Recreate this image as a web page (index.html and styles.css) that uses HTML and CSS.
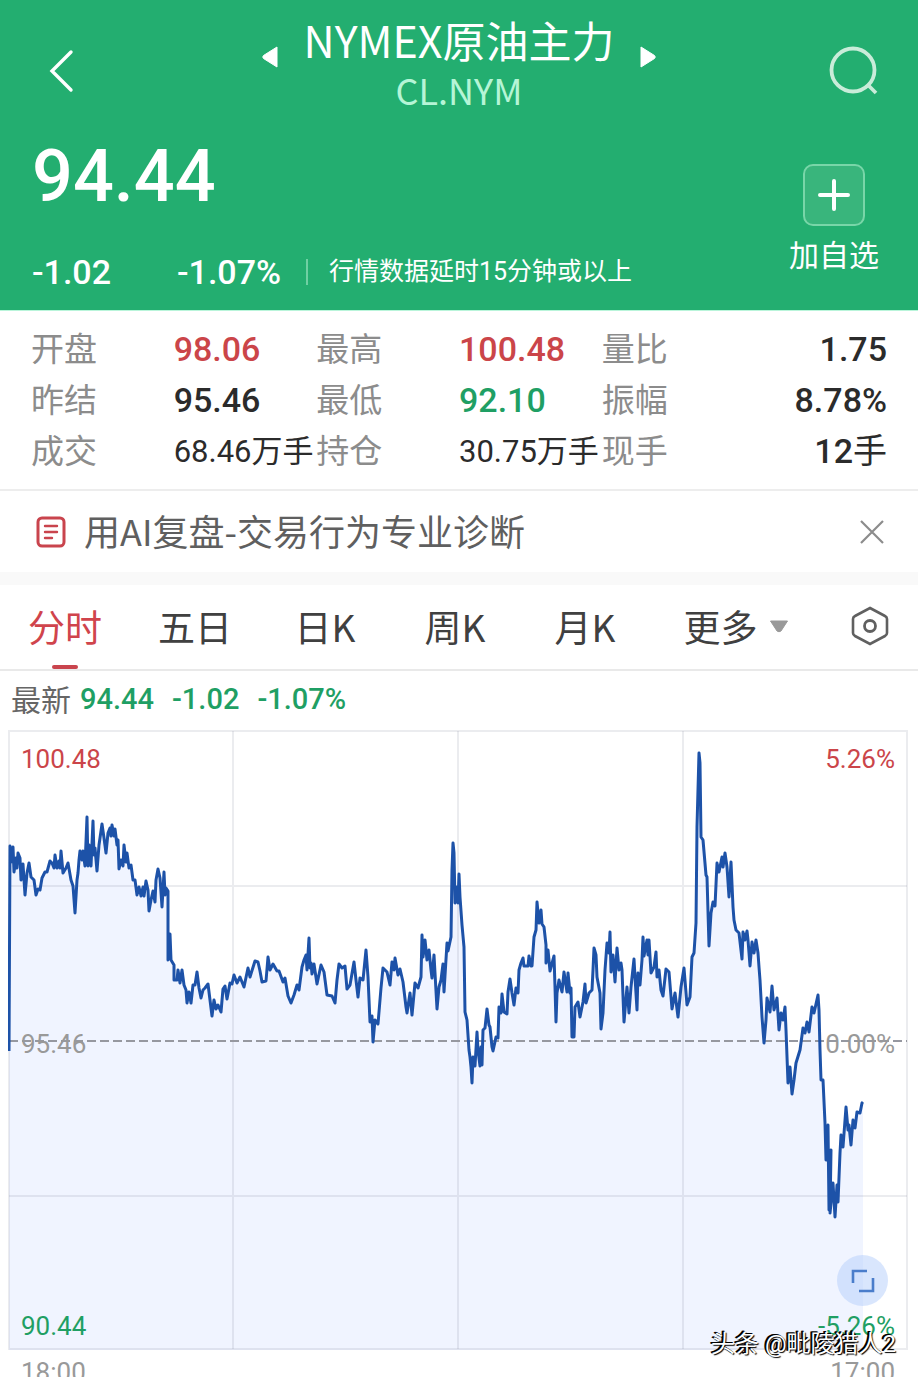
FILE: index.html
```
<!DOCTYPE html>
<html lang="zh-CN">
<head>
    <meta charset="UTF-8">
    <meta name="viewport" content="width=device-width, initial-scale=1.0">
    <title>NYMEX原油主力</title>
    <link rel="stylesheet" href="styles.css">
</head>
<body>
    <div class="app">
        <header class="header">
            <div class="nav">
                <button class="icon-button back" aria-label="返回">
                    <svg width="26" height="44" viewBox="0 0 26 44"><path d="M23 3L4 22l19 19" fill="none" stroke="#fff" stroke-width="3.4" stroke-linecap="round"/></svg>
                </button>
                <div class="switcher">
                    <button class="icon-button arrow" aria-label="上一个">
                        <svg width="16" height="24" viewBox="0 0 16 24"><path d="M15 2v20L1.500 13.500q-1.500-1.500 0-3z" fill="#fff" stroke="#fff" stroke-linejoin="round"/></svg>
                    </button>
                    <div class="name">
                        <h1>NYMEX原油主力</h1>
                        <p>CL.NYM</p>
                    </div>
                    <button class="icon-button arrow" aria-label="下一个">
                        <svg width="16" height="24" viewBox="0 0 16 24"><path d="M1 2v20l13.500-8.500q1.500-1.500 0-3z" fill="#fff" stroke="#fff" stroke-linejoin="round"/></svg>
                    </button>
                </div>
                <button class="icon-button search" aria-label="搜索">
                    <svg width="50" height="50" viewBox="0 0 50 50" fill="none" stroke="#c9ecd9" stroke-width="3.8"><circle cx="25" cy="24" r="21.500"/><path d="M40 39l8 8"/></svg>
                </button>
            </div>
            <div class="quote">
                <div>
                    <div class="price">94.44</div>
                    <div class="change">
                        <span class="diff">-1.02</span>
                        <span>-1.07%</span>
                        <small>行情数据延时15分钟或以上</small>
                    </div>
                </div>
                <button class="add">
                    <span class="add-box">
                        <svg width="32" height="32" viewBox="0 0 32 32"><path d="M16 2v28M2 16h28" stroke="#fff" stroke-width="4" stroke-linecap="round"/></svg>
                    </span>
                    加自选
                </button>
            </div>
        </header>

        <dl class="stats">
            <dt>开盘</dt><dd class="up">98.06</dd>
            <dt>最高</dt><dd class="up">100.48</dd>
            <dt>量比</dt><dd class="end">1.75</dd>
            <dt>昨结</dt><dd>95.46</dd>
            <dt>最低</dt><dd class="down">92.10</dd>
            <dt>振幅</dt><dd class="end">8.78%</dd>
            <dt>成交</dt><dd class="long">68.46万手</dd>
            <dt>持仓</dt><dd class="long">30.75万手</dd>
            <dt>现手</dt><dd class="end">12<span class="unit">手</span></dd>
        </dl>

        <div class="banner">
            <svg width="30" height="32" viewBox="0 0 30 32" fill="none" stroke="#c9444d" stroke-width="3"><rect x="2" y="2" width="26" height="28" rx="4"/><path d="M9 10h12M9 16h12M9 22h7" stroke-width="2.400" stroke-linecap="round"/></svg>
            <a href="#">用AI复盘-交易行为专业诊断</a>
            <button class="icon-button" aria-label="关闭">
                <svg width="26" height="26" viewBox="0 0 26 26"><path d="M2 2l22 22M24 2L2 24" stroke="#8c8c8c" stroke-width="2.200"/></svg>
            </button>
        </div>

        <nav class="tabs">
            <button class="tab active">分时</button>
            <button class="tab">五日</button>
            <button class="tab">日K</button>
            <button class="tab">周K</button>
            <button class="tab">月K</button>
            <button class="tab">更多<svg width="20" height="14" viewBox="0 0 20 14"><path d="M1.500 2h17L12 12q-2 1.500-4 0z" fill="#999" stroke="#999" stroke-linejoin="round"/></svg></button>
            <button class="tab" aria-label="设置">
                <svg width="38" height="40" viewBox="0 0 38 40" fill="none" stroke="#606060" stroke-width="2.600"><path d="M19 2l15 8q2 1 2 3v14q0 2-2 3l-15 8-15-8q-2-1-2-3V13q0-2 2-3z"/><circle cx="19" cy="20" r="5.500" stroke-width="2.800"/></svg>
            </button>
        </nav>

        <div class="latest">
            <span class="label">最新</span>
            <span>94.44</span>
            <span>-1.02</span>
            <span>-1.07%</span>
        </div>

        <div class="chart">
            <svg class="plot" viewBox="8 730 900 620">
                <polygon id="area" fill="#f0f4ff"/>
                <g class="grid">
                    <rect x="9" y="731" width="898" height="618"/>
                    <path d="M233 731v618M458 731v618M683 731v618M9 886h898M9 1196h898"/>
                </g>
                <path class="zero" d="M9 1041h898"/>
                <polyline id="line" points="
                    9,1051 10,846 11,862 13,847 14,872 16,858 17,868 18,853 20,858 21,880 23,864 25,895 27,873 29,863 31,877 34,880
                    36,895 38,889 40,890 42,878 45,872 47,872 50,861 52,863 54,868 55,855 57,868 59,861 60,868 61,851 63,873 66,868
                    68,863 71,880 73,886 75,913 77,880 78,873 79,860 80,851 82,860 83,851 85,866 87,817 88,866 89,845 91,866 93,821
                    94,855 95,848 97,871 99,845 102,824 104,838 106,853 108,833 110,828 111,836 112,825 114,836 115,829 117,845
                    118,840 119,869 121,860 123,866 124,845 126,862 127,853 129,868 131,865 133,880 135,880 137,895 139,887 141,896
                    143,887 144,896 146,881 148,890 149,911 151,900 153,891 155,902 156,880 158,869 160,878 162,907 164,872 165,895
                    166,888 168,891 168,960 170,934 171,960 174,965 174,980 177,980 178,970 180,983 182,970 184,985 186,990 187,1003
                    189,992 191,1003 193,985 195,985 197,972 199,988 201,998 203,990 205,988 208,984 210,1000 212,1016 214,1000
                    216,1009 218,1005 221,1012 223,989 225,986 227,999 230,983 232,984 234,975 237,983 240,977 244,987 248,968
                    250,977 255,961 258,962 260,971 262,982 266,981 268,957 270,970 273,964 277,971 279,971 283,982 285,978
                    288,996 291,1003 294,995 297,985 299,990 302,967 304,960 306,955 307,970 309,938 310,968 311,963 312,974
                    314,964 317,984 321,965 324,972 327,995 332,996 335,1003 337,980 339,964 342,968 345,966 347,989 350,985
                    354,962 356,980 358,997 360,978 363,980 366,950 368,977 370,1022 372,1016 373,1042 375,1020 378,1024 381,988
                    383,968 387,972 390,985 392,962 394,970 395,958 398,975 400,969 403,982 406,1007 407,1013 410,993 412,1015
                    415,983 418,988 421,977 422,935 423,957 425,940 427,960 429,950 431,970 432,978 434,955 437,1009 439,987
                    441,980 443,964 444,992 447,943 448,951 451,937 452,870 453,843 454,853 455,903 457,887 458,903 459,874
                    460,897 462,925 464,947 465,1012 467,1020 469,1050 470,1057 471,1067 472,1083 473,1057 475,1066 477,1032
                    478,1050 480,1066 481,1047 482,1065 483,1030 485,1028 487,1009 489,1025 490,1027 492,1047 493,1051 496,1037
                    498,1038 499,1007 501,1013 502,994 504,1012 507,1014 508,992 510,979 512,993 514,1005 516,988 518,993
                    519,970 521,963 523,958 524,966 528,966 529,956 531,966 532,966 534,937 536,930 537,902 539,923 541,910
                    542,924 544,927 546,945 546,963 548,950 550,971 554,956 555,987 556,1022 557,993 559,980 562,992 564,972
                    567,992 568,973 570,993 571,988 572,1037 574,1037 575,1007 578,1002 580,1017 583,1002 585,984 586,1003
                    589,993 592,990 593,970 594,948 596,955 597,977 600,993 601,1029 603,1013 605,970 607,943 609,953 610,932
                    611,972 613,955 615,982 617,948 619,970 621,963 622,970 624,1022 627,987 629,1013 631,987 634,959 635,977
                    637,1010 638,973 640,985 642,960 643,937 644,956 647,940 648,955 649,940 651,973 654,967 656,952 657,977
                    659,970 661,990 663,996 666,969 669,972 672,1009 675,993 678,1017 681,987 684,968 687,1005 690,997
                    692,957 694,953 696,923 697,827 699,753 700,763 701,837 703,840 706,875 707,877 709,946 711,913 713,902
                    715,906 717,863 719,872 722,857 723,867 725,853 727,867 729,897 731,862 733,907 734,920 736,930 739,933
                    742,959 743,932 745,940 747,931 748,940 750,966 752,942 754,953 756,940 758,953 759,967 760,980 762,1017
                    764,1043 766,1020 767,998 770,1012 772,986 774,1010 777,998 779,1030 781,1013 783,1020 785,1007 786,1030
                    788,1083 790,1067 792,1094 794,1080 796,1063 800,1050 803,1028 805,1033 807,1022 809,1032 812,1007 814,1013
                    818,995 819,1010 820,1050 821,1080 823,1080 825,1123 826,1160 828,1125 829,1210 831,1150 830,1213 833,1183
                    835,1217 837,1185 838,1202 840,1153 841,1135 843,1147 846,1107 848,1130 849,1125 851,1145 853,1120 855,1128
                    857,1112 860,1113 862,1103 863,1102"/>
            </svg>
            <span class="mark top left up">100.48</span>
            <span class="mark top right up">5.26%</span>
            <span class="mark middle left">95.46</span>
            <span class="mark middle right">0.00%</span>
            <span class="mark bottom left down">90.44</span>
            <span class="mark bottom right down">-5.26%</span>
            <button class="expand" aria-label="全屏">
                <svg width="24" height="24" viewBox="0 0 24 24" fill="none" stroke="#4a7dcb" stroke-width="2.600"><path d="M2 14V2h14M22 9v13H8"/></svg>
            </button>
        </div>
        <div class="times">
            <span>18:00</span>
            <span>17:00</span>
        </div>
        <div class="watermark">头条 @毗陵猎人2</div>
    </div>

    <script>
        // Area under the price line
        const points = document.getElementById('line').getAttribute('points').trim();
        document.getElementById('area').setAttribute('points', '9,1350 ' + points + ' 863,1350');
    </script>
</body>
</html>
```

FILE: styles.css
```
* {
    box-sizing: border-box;
}
body {
    margin: 0;
    background-color: #fff;
    color: #2b2b2b;
    font-family: Roboto, "Noto Sans CJK SC", sans-serif;
}
button {
    padding: 0;
    border: none;
    background: none;
    color: inherit;
    font: inherit;
    cursor: pointer;
}
svg {
    display: block;
}
h1, p, dl, dd {
    margin: 0;
}
.app {
    position: relative;
    height: 100vh;
    overflow: hidden;
}
.up { color: #cb4549; }
.down { color: #1f9f64; }

/* Header */
.header {
    height: 311px;
    border-bottom: 1px solid #b9f5da;
    background-color: #23ae70;
    color: #fff;
}
.nav {
    display: grid;
    grid-template-columns: 1fr auto 1fr;
    align-items: center;
    height: 142px;
    padding: 0 40px;
}
.nav .back {
    justify-self: start;
    padding-left: 8px;
}
.nav .search {
    justify-self: end;
}
.switcher {
    display: flex;
    align-items: center;
    gap: 26px;
}
.arrow {
    margin-bottom: 28px;
}
.name {
    padding-bottom: 14px;
    text-align: center;
    font-family: "Noto Sans CJK SC", sans-serif;
    line-height: 50px;
}
.name h1 {
    font-size: 43px;
    font-weight: 400;
}
.name p {
    font-size: 36px;
    color: #b5f5d6;
}
.quote {
    display: flex;
    justify-content: space-between;
    padding: 0 39px 0 32px;
}
.price {
    font-size: 72px;
    font-weight: 500;
    line-height: 70px;
}
.change {
    display: flex;
    align-items: center;
    margin-top: 42px;
    font-size: 34px;
    font-weight: 500;
    line-height: 36px;
}
.change .diff {
    width: 145px;
}
.change small {
    margin-left: 25px;
    padding-left: 21px;
    border-left: 2px solid #6fd0a3;
    font-size: 25px;
    font-weight: 400;
    line-height: 26px;
}
.add {
    display: flex;
    flex-direction: column;
    align-items: center;
    margin-top: 22px;
    font-size: 30px;
    line-height: 60px;
}
.add-box {
    display: grid;
    place-items: center;
    width: 62px;
    height: 62px;
    border: 2px solid #78d6a8;
    border-radius: 10px;
    background-color: #39b57c;
}

/* Stats */
.stats {
    display: grid;
    grid-template-columns: repeat(6, 1fr);
    padding: 13px 31px 12px 31px;
    border-bottom: 2px solid #ededed;
    font-size: 33px;
    line-height: 51px;
    white-space: nowrap;
}
.stats dt {
    color: #8c8c8c;
}
.stats dd {
    font-size: 34px;
    font-weight: 500;
}
.stats .long {
    font-size: 31px;
    font-weight: 400;
}
.stats .end {
    text-align: right;
}
.stats .unit {
    font-weight: 400;
}

/* Banner */
.banner {
    display: flex;
    align-items: center;
    height: 94px;
    padding: 0 33px 0 36px;
    border-bottom: 13px solid #f9f9f9;
}
.banner a {
    flex: 1;
    margin-left: 18px;
    padding-bottom: 3px;
    color: #5f5f5f;
    font-family: "Noto Sans CJK SC", sans-serif;
    font-size: 36px;
    text-decoration: none;
}

/* Tabs */
.tabs {
    display: grid;
    grid-template-columns: repeat(5, 130fr) 172fr 96fr;
    height: 86px;
    border-bottom: 2px solid #e9e9e9;
}
.tab {
    position: relative;
    display: flex;
    align-items: center;
    justify-content: center;
    gap: 11px;
    padding-bottom: 2px;
    color: #404040;
    font-family: "Noto Sans CJK SC", sans-serif;
    font-size: 37px;
}
.tab.active {
    color: #d0444c;
}
.tab.active::after {
    content: "";
    position: absolute;
    bottom: 0;
    width: 26px;
    height: 4px;
    border-radius: 2px;
    background-color: #c9444d;
}

/* Chart */
.latest {
    display: flex;
    align-items: center;
    gap: 18px;
    height: 59px;
    padding: 0 0 4px 11px;
    color: #1f9f64;
    font-size: 29px;
    font-weight: 500;
}
.latest .label {
    margin-right: -9px;
    padding-bottom: 2px;
    color: #666;
    font-size: 30px;
    font-weight: 400;
}
.chart {
    position: relative;
    margin: 0 10px 0 8px;
}
.plot {
    width: 100%;
}
.grid {
    fill: none;
    stroke: rgba(120, 125, 145, 0.15);
    stroke-width: 2;
}
.zero {
    stroke: #9698a0;
    stroke-width: 2;
    stroke-dasharray: 9 4;
}
#line {
    fill: none;
    stroke: #1d52a8;
    stroke-width: 3;
    stroke-linejoin: round;
}
.mark {
    position: absolute;
    color: #999;
    font-size: 26px;
    line-height: 30px;
}
.mark.left { left: 13px; }
.mark.right { right: 13px; }
.mark.top { top: 14px; }
.mark.middle { top: 50%; margin-top: -11px; }
.mark.bottom { bottom: 9px; }
.mark.up { color: #cb4549; }
.mark.down { color: #1f9f64; }
.expand {
    position: absolute;
    right: 20px;
    bottom: 44px;
    display: grid;
    place-items: center;
    width: 51px;
    height: 51px;
    border-radius: 50%;
    background-color: rgba(185, 210, 252, 0.55);
}
.times {
    display: flex;
    justify-content: space-between;
    padding: 7px 23px 0 21px;
    color: #999;
    font-size: 26px;
    line-height: 30px;
}
.watermark {
    position: absolute;
    right: 22px;
    bottom: 16px;
    color: #fff;
    font-size: 24px;
    line-height: 34px;
    text-shadow: -1px -1px 0 #000, -2px -1px 0 #000, 1px 1px 1px #000;
}
```
